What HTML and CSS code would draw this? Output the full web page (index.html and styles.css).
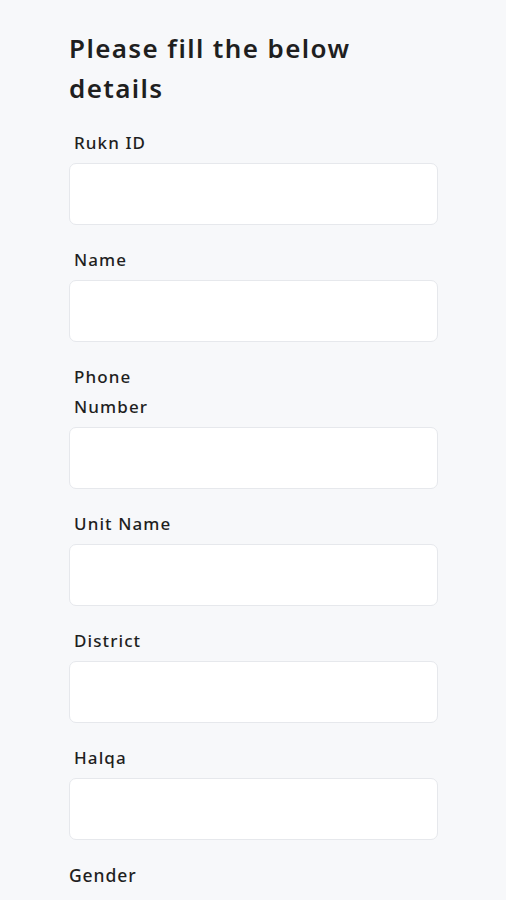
FILE: index.html
```html
<!DOCTYPE html>
<html lang="en">
<head>
    <meta charset="UTF-8">
    <meta name="viewport" content="width=device-width, initial-scale=1.0">
    <title>Details</title>
    <link rel="stylesheet" href="styles.css">
</head>
<body>

    <div class="form-page">
        <h1 class="form-title">Please fill the below details</h1>

        <form class="details-form">
            <div class="field">
                <label class="field-label" for="rukn">Rukn ID</label>
                <input class="field-input" type="text" id="rukn">
            </div>
            <div class="field">
                <label class="field-label" for="name">Name</label>
                <input class="field-input" type="text" id="name">
            </div>
            <div class="field">
                <label class="field-label" for="phone">Phone Number</label>
                <input class="field-input" type="tel" id="phone">
            </div>
            <div class="field">
                <label class="field-label" for="unit">Unit Name</label>
                <input class="field-input" type="text" id="unit">
            </div>
            <div class="field">
                <label class="field-label" for="district">District</label>
                <input class="field-input" type="text" id="district">
            </div>
            <div class="field">
                <label class="field-label" for="halqa">Halqa</label>
                <input class="field-input" type="text" id="halqa">
            </div>
            <div class="field">
                <span class="group-label">Gender</span>
            </div>
        </form>
    </div>

</body>
</html>
```

FILE: styles.css
```css
:root {
    --background-color: #f7f8fa;
    --text-color: #1f1f1f;
    --input-bg: #fff;
    --input-border: #e6e8ec;
}

body, html {
    margin: 0;
    font-family: 'Noto Sans', 'Open Sans', sans-serif;
    background-color: var(--background-color);
    color: var(--text-color);
    overflow: hidden;
}

.form-page {
    padding: 28px 0 0 69px;
    width: 369px;
}

.form-title {
    width: 310px;
    margin: 0;
    font-size: 26px;
    line-height: 40px;
    font-weight: 600;
    letter-spacing: 1.4px;
}

.details-form {
    display: flex;
    flex-direction: column;
}

.field {
    display: flex;
    flex-direction: column;
    margin-top: 20px;
}

.field-label {
    width: 115px;
    padding-left: 5px;
    font-size: 17px;
    font-weight: 500;
    line-height: 30px;
    letter-spacing: 1.1px;
    margin-bottom: 5px;
}

.group-label {
    font-size: 17.5px;
    font-weight: 500;
    line-height: 30px;
    letter-spacing: 0.9px;
}

.field-input {
    box-sizing: border-box;
    height: 62px;
    width: 100%;
    background-color: var(--input-bg);
    border: 1px solid var(--input-border);
    border-radius: 7px;
    outline: none;
}
```
